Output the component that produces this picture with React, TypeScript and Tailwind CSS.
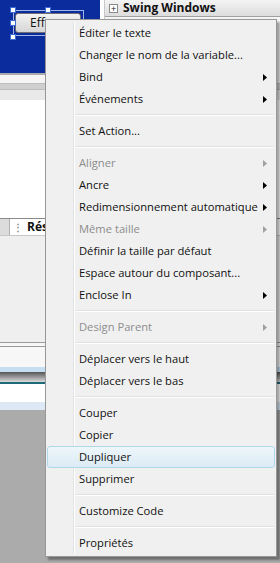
import React from 'react'

type Entry =
  | { kind: 'item'; label: string; disabled?: boolean; submenu?: boolean; active?: boolean }
  | { kind: 'sep' }

const entries: Entry[] = [
  { kind: 'item', label: 'Éditer le texte' },
  { kind: 'item', label: 'Changer le nom de la variable...' },
  { kind: 'item', label: 'Bind', submenu: true },
  { kind: 'item', label: 'Événements', submenu: true },
  { kind: 'sep' },
  { kind: 'item', label: 'Set Action...' },
  { kind: 'sep' },
  { kind: 'item', label: 'Aligner', disabled: true, submenu: true },
  { kind: 'item', label: 'Ancre', submenu: true },
  { kind: 'item', label: 'Redimensionnement automatique', submenu: true },
  { kind: 'item', label: 'Même taille', disabled: true, submenu: true },
  { kind: 'item', label: 'Définir la taille par défaut' },
  { kind: 'item', label: 'Espace autour du composant...' },
  { kind: 'item', label: 'Enclose In', submenu: true },
  { kind: 'sep' },
  { kind: 'item', label: 'Design Parent', disabled: true, submenu: true },
  { kind: 'sep' },
  { kind: 'item', label: 'Déplacer vers le haut' },
  { kind: 'item', label: 'Déplacer vers le bas' },
  { kind: 'sep' },
  { kind: 'item', label: 'Couper' },
  { kind: 'item', label: 'Copier' },
  { kind: 'item', label: 'Dupliquer', active: true },
  { kind: 'item', label: 'Supprimer' },
  { kind: 'sep' },
  { kind: 'item', label: 'Customize Code' },
  { kind: 'sep' },
  { kind: 'item', label: 'Propriétés' },
]

const Arrow: React.FC<{ disabled?: boolean }> = ({ disabled }) => (
  <svg width="4" height="7" viewBox="0 0 4 7" className="shrink-0">
    <path d="M0 0 L4 3.5 L0 7 Z" fill={disabled ? '#a0a0a0' : '#000'} />
  </svg>
)

const Handle: React.FC<{ className: string }> = ({ className }) => (
  <div className={`absolute w-[6px] h-[6px] bg-white border border-[#3a6bd0] ${className}`} />
)

const ContextMenu: React.FC = () => (
  <div className="absolute left-[45px] top-[19px] w-[232px] bg-[#f0f0f0] border border-[#979797] py-[2px] shadow-[3px_3px_2px_rgba(0,0,0,0.35)]">
    {/* gutter line */}
    <div className="absolute left-[27px] top-[2px] bottom-[2px] w-[2px] border-l border-[#e2e3e3] bg-white" />
    {entries.map((e, i) =>
      e.kind === 'sep' ? (
        <div key={i} className="relative h-[10px] ml-[29px] mr-[2px] flex flex-col justify-center">
          <div className="h-px bg-[#e0e0e0]" />
          <div className="h-px bg-white" />
        </div>
      ) : (
        <div
          key={i}
          className={`relative h-[22px] mx-[1px] flex items-center gap-[3px] pl-[31px] pr-[7px] rounded-[3px] border ${
            e.active
              ? 'border-[#aed8ea] bg-gradient-to-b from-[#eef6fb] to-[#dcebf5]'
              : 'border-transparent'
          } ${e.disabled ? 'text-[#8d8d8d]' : 'text-[#111]'}`}
        >
          <span className="flex-1 whitespace-nowrap">{e.label}</span>
          {e.submenu && <Arrow disabled={e.disabled} />}
        </div>
      )
    )}
  </div>
)

export default function App() {
  return (
    <div
      className="relative w-[280px] h-[563px] overflow-hidden bg-[#ababab] text-[11.2px] leading-none"
      style={{ fontFamily: '"Open Sans", "Noto Sans", sans-serif' }}
    >
      {/* Top row: designer form + palette header */}
      <div className="flex h-[75px]">
        <div className="relative w-[100px] h-[73px] bg-[#0b2c9c]">
          <div className="absolute left-[15px] top-[13px] w-[66px] h-[20px] rounded-[3px] border border-[#707070] bg-gradient-to-b from-[#f2f2f2] to-[#d6d6d6] flex items-center pl-[14px] text-[12px] text-[#111]">
            Eff
          </div>
          <div className="absolute left-[13px] top-[10px] w-[71px] h-[26px] border border-[#9fb5e8]" />
          <Handle className="left-[10px] top-[7px]" />
          <Handle className="left-[45px] top-[7px]" />
          <Handle className="left-[10px] top-[20px]" />
          <Handle className="left-[10px] top-[34px]" />
        </div>
        <div className="w-[5px] bg-white border-r border-[#c8c8c8]" />
        <div className="flex-1 bg-white flex flex-col">
          <div className="h-[17px] bg-gradient-to-b from-[#f4f4f4] to-[#dcdcdc] border-b border-[#a0a0a0] flex items-center gap-[5px] pl-[4px] font-bold text-[12px] text-[#111]">
            <div className="w-[9px] h-[9px] border border-[#888] bg-white flex items-center justify-center text-[9px] leading-none font-normal">+</div>
            <span className="whitespace-nowrap">Swing Windows</span>
          </div>
          <div className="flex-1 bg-[#f5f5f5]" />
        </div>
      </div>
      {/* scroll band */}
      <div className="h-[8px] bg-[#f5f5f5]" />
      <div className="h-[7px] bg-[#cfcfcf] border-y border-[#bdbdbd]" />
      <div className="h-[10px] bg-[#e9e9e9]" />
      <div className="h-[118px] bg-white" />
      {/* tab bar */}
      <div className="h-[17px] flex border-t border-[#8a8a8a] bg-[#dcdcdc]">
        <div className="w-[10px] border-r border-[#b0b0b0]" />
        <div className="flex-1 bg-white flex items-center gap-[4px] pl-[3px] font-bold text-[12px] text-[#111]">
          <span className="text-[#888] text-[10px]">⋮</span>
          <span>Résumé</span>
        </div>
      </div>
      <div className="h-[107px] bg-[#efefef] border-t border-[#c8c8c8]" />
      <div className="h-[5px] bg-[#f7f7f7] border-y border-[#9a9a9a]" />
      <div className="h-[20px] bg-[#f7f7f7]" />
      <div className="h-[5px] bg-[#c6def2]" />
      <div className="h-[12px] bg-gradient-to-b from-[#555] via-[#999] to-[#ddd] border-b-2 border-[#1f6a78]" />
      <div className="h-[18px] bg-white" />
      <div className="h-[8px] bg-[#dce9f4]" />
      <ContextMenu />
    </div>
  )
}
